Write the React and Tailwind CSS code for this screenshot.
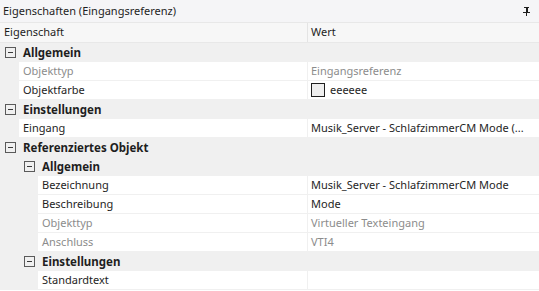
import React from "react";

const rows = [
  { type: "cat", level: 0, label: "Allgemein" },
  { type: "prop", level: 0, label: "Objekttyp", value: "Eingangsreferenz", muted: true },
  { type: "prop", level: 0, label: "Objektfarbe", value: "eeeeee", swatch: true },
  { type: "cat", level: 0, label: "Einstellungen" },
  { type: "prop", level: 0, label: "Eingang", value: "Musik_Server - SchlafzimmerCM Mode (..." },
  { type: "cat", level: 0, label: "Referenziertes Objekt" },
  { type: "cat", level: 1, label: "Allgemein" },
  { type: "prop", level: 1, label: "Bezeichnung", value: "Musik_Server - SchlafzimmerCM Mode" },
  { type: "prop", level: 1, label: "Beschreibung", value: "Mode" },
  { type: "prop", level: 1, label: "Objekttyp", value: "Virtueller Texteingang", muted: true },
  { type: "prop", level: 1, label: "Anschluss", value: "VTI4", muted: true },
  { type: "cat", level: 1, label: "Einstellungen" },
  { type: "prop", level: 1, label: "Standardtext", value: "" },
];

function Box() {
  return (
    <span className="w-[11px] h-[11px] border border-[#5a5a5a] flex items-center justify-center shrink-0">
      <span className="w-[5px] h-px bg-[#3a3a3a]" />
    </span>
  );
}

function Row({ r }) {
  if (r.type === "cat") {
    return (
      <div className="h-[19px] flex items-center bg-[#f0f0f0] font-bold text-[#1e1e1e]">
        <div className={r.level === 0 ? "w-[19px] flex justify-center pl-[1px]" : "w-[38px] flex justify-end pr-[3px]"}>
          <Box />
        </div>
        <span className="pl-[4px] leading-none text-[11.5px]">{r.label}</span>
      </div>
    );
  }
  return (
    <div className="h-[19px] flex bg-[#f0f0f0]">
      <div className={r.level === 0 ? "w-[19px] shrink-0" : "w-[38px] shrink-0"} />
      <div className="flex-1 flex bg-white border-b border-[#f0f0f0]">
        <div className={`flex items-center pl-[4px] border-r border-[#f0f0f0] ${r.level === 0 ? "w-[289px]" : "w-[270px]"} ${r.muted ? "text-[#8c8c8c]" : "text-[#1e1e1e]"}`}>
          {r.label}
        </div>
        <div className={`flex-1 flex items-center pl-[3px] whitespace-nowrap overflow-hidden ${r.muted ? "text-[#8c8c8c]" : "text-[#1e1e1e]"}`}>
          {r.swatch && <span className="w-[14px] h-[14px] border border-[#1e1e1e] bg-[#eeeeee] mr-[5px] shrink-0" />}
          {r.value}
        </div>
      </div>
    </div>
  );
}

export default function App() {
  return (
    <div className="w-[539px] h-[291px] bg-white overflow-hidden text-[11px] font-['Noto_Sans',sans-serif]">
      <div className="h-[22px] flex items-center justify-between pl-[3px] pr-[8px] bg-[#f5f5f7] text-[#1e1e1e]">
        <span>Eigenschaften (Eingangsreferenz)</span>
        <svg width="9" height="10" viewBox="0 0 9 10">
          <path d="M2 1h5v1H6v4h2v1H5v3H4V7H1V6h2V2H2z" fill="#1e1e1e" />
          <path d="M3 2h1v4H3z" fill="#f5f5f7" />
        </svg>
      </div>
      <div className="h-[21px] flex bg-[#f7f7f7] border-y border-[#e8e8e8] text-[#1e1e1e]">
        <div className="w-[308px] flex items-center pl-[4px] border-r border-[#e4e4e4]">Eigenschaft</div>
        <div className="flex-1 flex items-center pl-[3px]">Wert</div>
      </div>
      {rows.map((r, i) => (
        <Row key={i} r={r} />
      ))}
    </div>
  );
}
